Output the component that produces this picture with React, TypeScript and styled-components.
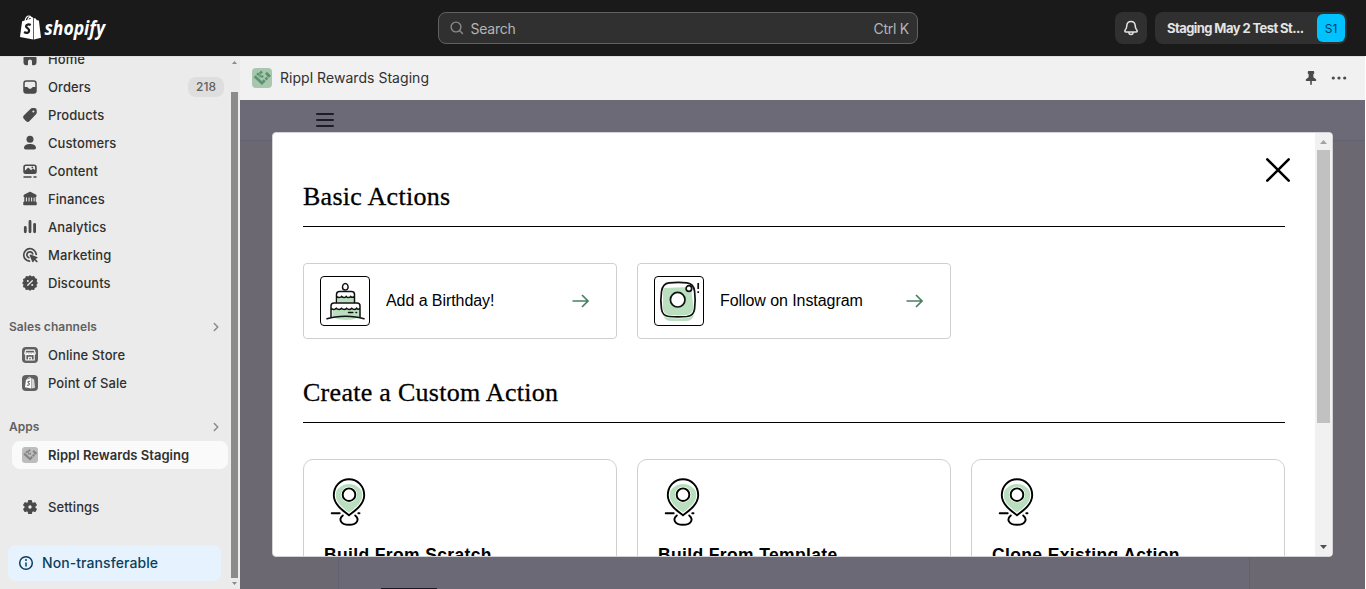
import React from "react";
import styled, { createGlobalStyle } from "styled-components";

const GlobalStyle = createGlobalStyle`
  *, *::before, *::after { box-sizing: border-box; }
  body { margin: 0; background: #fff; font-family: Inter, "Liberation Sans", sans-serif; overflow: hidden; }
  svg { display: block; flex: none; }
  h2, h3 { margin: 0; }
`;

const Page = styled.div`
  height: 589px;
  display: flex;
  flex-direction: column;
  overflow: hidden;
`;

/* Top bar */
const TopBar = styled.header`
  height: 56px;
  flex: none;
  background: #1a1a1a;
  display: grid;
  grid-template-columns: 438px 480px 1fr;
  align-items: center;
`;
const Brand = styled.div`
  padding-left: 19px;
`;
const SearchBox = styled.div`
  height: 32px;
  border: 1px solid #616161;
  border-radius: 8px;
  background: #303030;
  display: flex;
  align-items: center;
  padding: 0 8px;
  color: #b5b5b5;
  font-size: 14px;
  letter-spacing: -0.25px;
`;
const SearchText = styled.span`
  flex: 1;
  margin-left: 3.5px;
`;
const TopActions = styled.div`
  display: flex;
  justify-content: flex-end;
  gap: 8px;
  padding-right: 19px;
`;
const BellButton = styled.div`
  width: 32px;
  height: 32px;
  border-radius: 8px;
  background: #303030;
  display: grid;
  place-items: center;
`;
const StoreButton = styled.div`
  width: 192px;
  height: 32px;
  border-radius: 8px;
  background: #303030;
  display: flex;
  align-items: center;
  justify-content: space-between;
  padding: 0 2px 0 12px;
  color: #e3e3e3;
  font-size: 13px;
  font-weight: 700;
  white-space: nowrap;
  letter-spacing: -0.58px;
`;
const Avatar = styled.span`
  width: 28px;
  height: 28px;
  border-radius: 6px;
  background: #00c2ff;
  color: #003d59;
  font-size: 12px;
  font-weight: 400;
  letter-spacing: 0;
  display: grid;
  place-items: center;
`;

const Body = styled.div`
  flex: 1;
  display: flex;
  min-height: 0;
`;

/* Sidebar */
const Sidebar = styled.aside`
  width: 240px;
  flex: none;
  background: #ebebeb;
  display: flex;
  overflow: hidden;
  border-top: 1px solid #e0e0e0;
`;
const Nav = styled.nav`
  width: 231px;
  flex: none;
  margin-top: -12px;
  display: flex;
  flex-direction: column;
`;
const NavRow = styled.div<{ $active?: boolean }>`
  height: 28px;
  flex: none;
  margin: 0 3px 0 12px;
  padding: 0 4px 0 8px;
  border-radius: 8px;
  background: ${(p) => (p.$active ? "#fafafa" : "transparent")};
  color: #303030;
  display: flex;
  align-items: center;
  gap: 8px;
  font-size: 13px;
  font-weight: ${(p) => (p.$active ? 600 : 500)};
  letter-spacing: ${(p) => (p.$active ? "0.03px" : "0.08px")};
`;
const Count = styled.span`
  margin-left: auto;
  width: 36px;
  height: 20px;
  border-radius: 8px;
  background: #dedede;
  color: #616161;
  font-size: 12px;
  line-height: 19px;
  letter-spacing: 0;
  text-align: center;
`;
const SectionTitle = styled.div`
  height: 28px;
  flex: none;
  margin-top: 16px;
  padding: 0 5px 0 9px;
  display: flex;
  align-items: center;
  justify-content: space-between;
  color: #616161;
  font-size: 12px;
  font-weight: 600;
  letter-spacing: 0.05px;
  line-height: 16px;
`;
const SettingsGap = styled.div`
  height: 24px;
  flex: none;
`;
const Notice = styled.div`
  height: 36px;
  flex: none;
  width: 213px;
  margin: 24px 0 0 8px;
  padding-left: 8px;
  border-radius: 8px;
  background: #e6f3ff;
  color: #0b3f5c;
  display: flex;
  align-items: center;
  gap: 6px;
  font-size: 14px;
  font-weight: 500;
  letter-spacing: 0.08px;
`;
const NoticeText = styled.span`
  padding-bottom: 1px;
`;
const SideScroll = styled.div`
  width: 7px;
  display: flex;
  flex-direction: column;
  align-items: center;
  justify-content: space-between;
  padding: 4px 0 4px;
`;
const SideThumb = styled.div`
  width: 7px;
  height: 486px;
  margin-top: 26px;
  margin-bottom: 3px;
  background: #8b8b8b;
`;

/* Application frame */
const Main = styled.main`
  width: 1125px;
  display: flex;
  flex-direction: column;
`;
const AppBar = styled.div`
  height: 44px;
  flex: none;
  border-top: 1px solid #e0e0e0;
  background: #f1f1f1;
  display: flex;
  align-items: center;
  gap: 8px;
  padding: 0 16px 1px 12px;
  color: #303030;
  font-size: 14px;
  letter-spacing: 0.04px;
`;
const AppName = styled.span`
  line-height: 20px;
  padding-bottom: 1px;
`;
const AppBarEnd = styled.div`
  margin-left: auto;
  display: flex;
  gap: 8px;
`;
const Stage = styled.div`
  flex: 1;
  min-height: 0;
  position: relative;
  background: #6c6872;
  display: flex;
  flex-direction: column;
`;
const StageHeader = styled.div`
  height: 41px;
  flex: none;
  background: #6c6a77;
  border-bottom: 1px solid #636171;
  padding: 13px 0 0 76px;
`;
const StagePanel = styled.div`
  flex: 1;
  width: 912px;
  margin-left: 98px;
  border: 1px solid #63616e;
  border-width: 0 1px;
  background: #6b6975;
  display: flex;
  align-items: flex-end;
  padding-left: 42px;
`;
const StageButton = styled.div`
  width: 56px;
  height: 1px;
  background: #1b1927;
`;

/* Dialog */
const Dialog = styled.section`
  position: absolute;
  left: 32px;
  top: 32px;
  width: 1061px;
  height: 425px;
  border: 1px solid #d3d3d6;
  border-radius: 4px;
  background: #fff;
  display: flex;
  overflow: hidden;
`;
const DialogBody = styled.div`
  flex: 1;
  min-width: 0;
  padding: 0 30px;
  overflow: hidden;
  display: flex;
  flex-direction: column;
`;
const CloseRow = styled.div`
  height: 50px;
  flex: none;
  display: flex;
  justify-content: flex-end;
  padding: 24px 0 0;
  margin-right: -6px;
`;
const Heading = styled.h2<{ $spaced?: boolean }>`
  flex: none;
  height: ${(p) => (p.$spaced ? "84px" : "44px")};
  padding-top: ${(p) => (p.$spaced ? "40px" : "0")};
  border-bottom: 1px solid #000;
  color: #000;
  font-family: "Liberation Serif", serif;
  font-weight: 400;
  font-size: 26px;
  line-height: 27px;
  -webkit-text-stroke: 0.3px #000;
  letter-spacing: 0.28px;
`;
const CardGrid = styled.div`
  flex: none;
  margin-top: 36px;
  display: grid;
  grid-template-columns: repeat(3, 314px);
  gap: 20px;
`;
const ActionCard = styled.div`
  height: 76px;
  border: 1px solid #cfcfcf;
  border-radius: 4px;
  display: flex;
  align-items: center;
  padding: 0 25px 0 16px;
`;
const IconTile = styled.div`
  width: 50px;
  height: 50px;
  border: 1px solid #000;
  border-radius: 4px;
  display: grid;
  place-items: center;
`;
const ActionLabel = styled.span`
  flex: 1;
  margin-left: 16px;
  font-family: "Liberation Sans", sans-serif;
  font-size: 16px;
  color: #000;
  letter-spacing: -0.07px;
`;
const CustomCard = styled.div`
  height: 200px;
  border: 1px solid #cfcfcf;
  border-radius: 10px;
  padding: 16px 20px;
`;
const CustomTitle = styled.h3`
  margin-top: 19px;
  font-family: "Liberation Sans", sans-serif;
  font-size: 17.5px;
  line-height: 20px;
  font-weight: 700;
  color: #000;
  letter-spacing: 0.36px;
`;
const DialogScroll = styled.div`
  width: 17px;
  flex: none;
  background: #f1f1f1;
  display: flex;
  flex-direction: column;
  align-items: center;
  justify-content: space-between;
  padding: 7px 0;
`;
const DialogThumb = styled.div`
  width: 13px;
  height: 273px;
  margin: 6px 0 auto;
  background: #c1c1c1;
`;

const ink = "#4a4a4a";

const Icon = ({ children, size = 20 }: { children: React.ReactNode; size?: number }) => (
  <svg width={size} height={size} viewBox="0 0 20 20" fill="none">
    {children}
  </svg>
);

const HomeIcon = () => (
  <Icon>
    <path fill={ink} d="M8.3 3.300a2.500 2.500 0 0 1 3.400 0l3.900 3.700c.6.6.9 1.300.9 2.100v4.650a2.400 2.400 0 0 1-2.400 2.400h-1.350a.75.75 0 0 1-.75-.75v-2.900c0-1.100-.9-2-2-2s-2 .9-2 2v2.900c0 .4-.35.75-.75.75H5.900a2.400 2.400 0 0 1-2.400-2.400V9.100c0-.8.3-1.500.9-2.100z" />
  </Icon>
);
const OrdersIcon = () => (
  <Icon>
    <path fill={ink} fillRule="evenodd" d="M6.250 3.250a3 3 0 0 0-3 3v7.500a3 3 0 0 0 3 3h7.500a3 3 0 0 0 3-3v-7.500a3 3 0 0 0-3-3zM4.750 6.250c0-.85.65-1.500 1.500-1.500h7.500c.85 0 1.500.65 1.500 1.500V10h-2.100c-.5 0-.8.2-1.100.55l-.6.75c-.2.250-.4.350-.7.350H9.250c-.3 0-.5-.1-.7-.350l-.6-.75C7.650 10.200 7.350 10 6.850 10h-2.100z" />
  </Icon>
);
const ProductsIcon = () => (
  <Icon>
    <path fill={ink} fillRule="evenodd" d="M10.700 3.700c.5-.4 1-.6 1.600-.6h2.050a2.400 2.400 0 0 1 2.400 2.400v2.050c0 .7-.25 1.300-.75 1.800l-6.400 6.600a2.600 2.600 0 0 1-3.700 0l-1.900-1.900a2.600 2.600 0 0 1 0-3.700zM13.400 7.600a1.050 1.050 0 1 0 0-2.100 1.050 1.050 0 0 0 0 2.100z" />
  </Icon>
);
const CustomersIcon = () => (
  <Icon>
    <circle cx="10" cy="6.300" r="3.500" fill={ink} />
    <path fill={ink} d="M4 14.800c0-2.300 2.700-3.700 6-3.700s6 1.400 6 3.700c0 1-.8 1.700-1.800 1.700H5.800c-1 0-1.800-.7-1.800-1.700z" />
  </Icon>
);
const ContentIcon = () => (
  <Icon>
    <path fill={ink} fillRule="evenodd" d="M6 3.500A2.700 2.700 0 0 0 3.250 6.200v4.300A2.500 2.500 0 0 0 5.750 13h8.500a2.500 2.500 0 0 0 2.500-2.500V6.200A2.700 2.700 0 0 0 14 3.500zM4.900 6.300c0-.8.5-1.300 1.300-1.300h7.600c.8 0 1.300.5 1.300 1.300v2.900l-1.300-1.100c-.5-.4-1-.4-1.500 0l-1.200 1.100-2-2c-.5-.5-1.100-.5-1.600 0L4.900 9.700z" />
    <circle cx="12.300" cy="6.400" r=".9" fill={ink} />
    <path stroke={ink} strokeWidth="1.500" strokeLinecap="round" d="M4 15.900h7M14 15.900h2" />
  </Icon>
);
const FinancesIcon = () => (
  <Icon>
    <path fill={ink} d="M9.300 2.900c.5-.25 1-.25 1.500 0l5 2.500c.9.500 1.200 2.600-.1 2.700v4.500c.7.100 1.050.6 1.050 1.300v1.600c0 .5-.3.750-.75.750H4c-.45 0-.75-.25-.75-.75v-1.600c0-.7.4-1.200 1.050-1.300V8.100C3 8 3.400 5.900 4.300 5.400z" />
    <path stroke="#ebebeb" strokeWidth="1.050" d="M6.400 8.500v4M9 8.500v4M11.600 8.500v4M14.100 8.500v4" />
  </Icon>
);
const AnalyticsIcon = () => (
  <Icon>
    <path stroke={ink} strokeWidth="2.800" strokeLinecap="round" d="M5.300 10.500v4.300M10 4.500v10.300M14.600 7.300v7.500" />
  </Icon>
);
const MarketingIcon = () => (
  <Icon>
    <path stroke={ink} strokeWidth="1.700" strokeLinecap="round" d="M9.500 16.200A6.250 6.250 0 1 1 16.200 9.400M8.800 12.600A3 3 0 1 1 12.700 8.800" />
    <path fill={ink} d="M9.700 10.500c-.2-.6.3-1.100.9-.9l6.500 2.300c.7.250.7 1.100 0 1.400l-1.600.7 1.900 1.900c.8.8-.4 2-1.200 1.200l-1.900-1.900-.7 1.600c-.3.700-1.200.6-1.400 0z" />
  </Icon>
);
const DiscountsIcon = () => (
  <Icon>
    <path fill={ink} stroke={ink} strokeWidth="1.500" strokeLinejoin="round" d="M10 3l1.700 1.300 2.100-.5 .7 1.900 1.900.8-.6 2L17 10l-1.300 1.600.5 2-1.900.7-.7 1.900-2-.5L10 17l-1.600-1.300-2.100.5-.7-1.900-1.900-.7.6-2L3 10l1.300-1.600-.5-2 1.900-.7.7-1.900 2 .5z" />
    <path stroke="#ebebeb" strokeWidth="1.300" strokeLinecap="round" d="M12.300 7.700l-4.600 4.600" />
    <circle cx="7.800" cy="8" r="1" fill="#ebebeb" />
    <circle cx="12.200" cy="12" r="1" fill="#ebebeb" />
  </Icon>
);
const StoreIcon = () => (
  <Icon>
    <rect x="2" y="2" width="16" height="16" rx="4" fill="#616161" />
    <path stroke="#fff" strokeWidth="1.100" strokeLinejoin="round" d="M5.700 5.100h8.600l1 3.200c0 1.700-2.300 1.700-2.700.2-.4 1.500-2.300 1.500-2.600 0-.3 1.500-2.200 1.500-2.600 0-.4 1.500-2.700 1.500-2.700-.2zM4.800 8h10.400M5.800 10v5h8.400v-5M8.700 15v-2.800h2.600V15" />
  </Icon>
);
const Bag = ({ front, side, letter }: { front: string; side: string; letter: string }) => (
  <>
    <path fill={front} d="M3.100 6.200 14.300 3.200V24.500L1 22z" />
    <path fill={side} d="M15 3.200l1.200.1 1.800 1.900 1.900.2L22 22.800 15 24.500z" />
    <path stroke={front} strokeWidth="1.200" fill="none" d="M6 6C6.600 3 8.300 1 10 1c1.500 0 2.400 1.600 2.400 4M8.800 5c.7-2 1.900-3 3.100-2.800 1 .2 1.700 1 2 2" />
    <path stroke={letter} strokeWidth="2.300" fill="none" d="M11.700 10c-2-1.100-4.500-.6-4.600 1.200-.1 2 3.300 2 3 4.600-.3 2.200-2.700 2.700-5 1.200" />
  </>
);
const PosIcon = () => (
  <Icon>
    <rect x="2" y="2" width="16" height="16" rx="4" fill="#616161" />
    <g transform="translate(4.500 3.700) scale(.48)">
      <Bag front="#fff" side="#d6d6d6" letter="#616161" />
    </g>
  </Icon>
);
const RipplIcon = ({ size, bg, fg }: { size: number; bg: string; fg: string }) => (
  <Icon size={size}>
    <rect width="20" height="20" rx="4" fill={bg} />
    <path stroke={fg} strokeWidth="2.700" d="M2.600 8.300l8.300 7.700M9.100 15.900l3.700-3.600M13.500 11.500l1.800-1.800M14 4.800l4 3.900" />
    <path stroke={fg} strokeWidth="2.400" d="M5 5.300l3.800 3.600M7.700 5.600l2.400-2.100M15.300 8.700l2.200-2.200" />
    <circle cx="10.300" cy="8.500" r="1.200" fill={fg} />
    <circle cx="7" cy="8" r=".8" fill={bg} />
  </Icon>
);
const SettingsIcon = () => (
  <Icon>
    <path fill={ink} fillRule="evenodd" stroke={ink} strokeWidth="1.200" strokeLinejoin="round" d="M8.700 3.700h2.600l.5 2 1.200.7 2-.6 1.300 2.200-1.500 1.400v1.400l1.500 1.400-1.300 2.200-2-.6-1.200.7-.5 2H8.700l-.5-2-1.200-.7-2 .6-1.300-2.200 1.500-1.400V9.400L3.700 8 5 5.800l2 .6 1.200-.7zM10 12.300a2.300 2.300 0 1 0 0-4.600 2.300 2.300 0 0 0 0 4.600z" />
  </Icon>
);
const InfoIcon = () => (
  <Icon>
    <circle cx="10" cy="10" r="6.300" stroke="#0b3f5c" strokeWidth="1.500" />
    <path stroke="#0b3f5c" strokeWidth="1.500" strokeLinecap="round" d="M10 10v3" />
    <circle cx="10" cy="7" r="1" fill="#0b3f5c" />
  </Icon>
);
const Chevron = () => (
  <Icon>
    <path stroke="#8a8a8a" strokeWidth="1.500" strokeLinecap="round" strokeLinejoin="round" d="M8.300 6.500l3.500 3.500-3.500 3.500" />
  </Icon>
);
const Triangle = ({ down, color, w = 7 }: { down?: boolean; color: string; w?: number }) => (
  <svg width={w} height={w === 5 ? 3 : 4} viewBox="0 0 8 4" preserveAspectRatio="none">
    <path fill={color} d={down ? "M0 0h8L4 4z" : "M0 4h8L4 0z"} />
  </svg>
);
const Arrow = () => (
  <svg width="20" height="16" viewBox="0 0 20 16" fill="none" stroke="#4b7f62" strokeWidth="1.700">
    <path d="M1.500 8h15.500M11 2l6 6-6 6" />
  </svg>
);

const CakeIcon = () => (
  <svg width="48" height="48" viewBox="0 0 48 48" fill="none" stroke="#111" strokeWidth="1.500" strokeLinecap="round">
    <path fill="#b9dfbf" stroke="none" d="M17 20.500h16v5H17zM11.500 32h27v7.500c-4 4.500-23 4.500-27 0z" />
    <path d="M24.300 6.500c1.700 0 2.800 2 2.800 3.700a2.800 2.800 0 0 1-5.600 0c0-1.700 1.100-3.700 2.800-3.700z" />
    <path d="M15.500 25.500V17.500c0-2 1-3 3-3h12c2 0 3 1 3 3v8M15.500 19.200c1.500 1.800 3.700 1.800 5 .2 1.600 1.600 3.500 1.600 4.700 0 1.400 1.600 3.200 1.500 4.500 0 1 1.200 2.600 1.200 3.800 0" />
    <path d="M10 40V29c0-2 1-3 3-3h23c2 0 3 1 3 3v11M10 31c1.700 2 3.800 2 5.300.3 1.700 1.700 3.600 1.700 5.200 0 1.700 1.700 3.500 1.700 5.100 0 1.700 1.700 3.500 1.700 5.100 0 1.700 1.700 3.400 1.700 4.900 0 1 1.400 2.400 1.300 3.400-.2" />
    <path d="M6 41.800c10-3.500 27-3.500 37 0M27.500 35.500h4.300M35 35.500h.5" />
  </svg>
);
const InstagramIcon = () => (
  <svg width="48" height="48" viewBox="0 0 48 48" fill="none" stroke="#111" strokeWidth="1.700" strokeLinecap="round">
    <path fill="#b9dfbf" stroke="none" d="M8 11l28-1 3 25c0 6-3 9-8 9H16c-6 0-8-4-8-9z" />
    <path stroke="#fff" strokeWidth="3" d="M6.500 32C5.700 27 5.700 20 6.500 14.500S10 6.200 14 5.800c6-.6 13-.6 18 0 4.500.5 7 3 7.600 8.500.7 5.500.7 12 0 17.500S36 39 32 39.500c-6 .6-12 .6-18 0-4.500-.5-6.900-2.500-7.500-7.500z" />
    <path d="M6.500 32C5.700 27 5.700 20 6.500 14.500S10 6.200 14 5.800c6-.6 13-.6 18 0 4.500.5 7 3 7.600 8.500.7 5.500.7 12 0 17.500S36 39 32 39.500c-6 .6-12 .6-18 0-4.500-.5-6.900-2.500-7.500-7.500z" />
    <circle cx="22.700" cy="22.700" r="7.300" fill="#fff" />
    <circle cx="33.900" cy="11.500" r="2.800" fill="#fff" />
    <path strokeLinecap="butt" d="M43.200 6v6M43.200 14.200v1.900" />
  </svg>
);
const PinIcon = () => (
  <svg width="50" height="50" viewBox="0 0 50 50" fill="none" stroke="#000" strokeWidth="1.900" strokeLinecap="round">
    <g transform="translate(.5 .7)">
      <circle cx="24.500" cy="22" r="14.800" fill="#b9dfbf" stroke="none" />
      <path stroke="#fff" strokeWidth="4" d="M24.500 38.500C17 33 9.300 27 9.300 18.500c0-9 6.500-16 15.200-16s15.200 7 15.200 16C39.700 27 32 33 24.500 38.500z" />
      <path d="M24.500 38.500C17 33 9.300 27 9.300 18.500c0-9 6.500-16 15.200-16s15.200 7 15.200 16C39.700 27 32 33 24.500 38.500z" />
      <circle cx="24.500" cy="18" r="7.900" fill="#fff" stroke="none" />
      <circle cx="24.500" cy="18" r="6.300" />
      <path d="M7.200 36.500h8M33.800 36.500h1.200M18.300 38.700c-4.300 3.500-2.800 9.400 6.200 9.400s10.500-5.900 6.200-9.400" />
    </g>
  </svg>
);

const navItems: [string, () => React.ReactElement, string?][] = [
  ["Home", HomeIcon],
  ["Orders", OrdersIcon, "218"],
  ["Products", ProductsIcon],
  ["Customers", CustomersIcon],
  ["Content", ContentIcon],
  ["Finances", FinancesIcon],
  ["Analytics", AnalyticsIcon],
  ["Marketing", MarketingIcon],
  ["Discounts", DiscountsIcon],
];

const customActions = ["Build From Scratch", "Build From Template", "Clone Existing Action"];

export default function App() {
  return (
    <Page>
      <GlobalStyle />
      <TopBar>
        <Brand>
          <svg width="90" height="28" viewBox="0 0 90 28">
            <g transform="translate(0 1)">
              <Bag front="#fff" side="#fff" letter="#1a1a1a" />
            </g>
            <text x="25.500" y="20.700" fill="#fff" fontFamily="Open Sans, sans-serif" fontWeight="700" fontStyle="italic" fontSize="19" textLength="60.500" lengthAdjust="spacingAndGlyphs">
              shopify
            </text>
          </svg>
        </Brand>
        <SearchBox>
          <Icon>
            <circle cx="9" cy="9" r="4.900" stroke="#8a8a8a" strokeWidth="1.400" />
            <path stroke="#8a8a8a" strokeWidth="1.400" strokeLinecap="round" d="M12.700 12.700l2.800 2.800" />
          </Icon>
          <SearchText>Search</SearchText>
          <span>Ctrl K</span>
        </SearchBox>
        <TopActions>
          <BellButton>
            <Icon>
              <path stroke="#e3e3e3" strokeWidth="1.500" strokeLinejoin="round" d="M10 3.600c-2.400 0-4 1.700-4.200 4-.1 2-.3 3-1.400 4.200-1 1.100-.7 2.100.6 2.100h10c1.300 0 1.600-1 .6-2.100-1.100-1.200-1.300-2.200-1.400-4.200-.2-2.300-1.800-4-4.200-4zM7.900 14.200c0 1.400.9 2.300 2.100 2.300s2.100-.9 2.100-2.300" />
            </Icon>
          </BellButton>
          <StoreButton>
            Staging May 2 Test St...
            <Avatar>S1</Avatar>
          </StoreButton>
        </TopActions>
      </TopBar>
      <Body>
        <Sidebar>
          <Nav>
            {navItems.map(([label, Glyph, count]) => (
              <NavRow key={label}>
                <Glyph />
                {label}
                {count && <Count>{count}</Count>}
              </NavRow>
            ))}
            <SectionTitle>
              Sales channels
              <Chevron />
            </SectionTitle>
            <NavRow><StoreIcon />Online Store</NavRow>
            <NavRow><PosIcon />Point of Sale</NavRow>
            <SectionTitle>
              Apps
              <Chevron />
            </SectionTitle>
            <NavRow $active>
              <Icon>
                <svg x="2" y="2" width="16" height="16" viewBox="0 0 20 20">
                  <RipplIcon size={20} bg="#bdbdbd" fg="#858585" />
                </svg>
              </Icon>
              Rippl Rewards Staging
            </NavRow>
            <SettingsGap />
            <NavRow><SettingsIcon />Settings</NavRow>
            <Notice>
              <InfoIcon />
              <NoticeText>Non-transferable</NoticeText>
            </Notice>
          </Nav>
          <SideScroll>
            <Triangle color="#8b8b8b" w={5} />
            <SideThumb />
            <Triangle down color="#8b8b8b" w={5} />
          </SideScroll>
        </Sidebar>
        <Main>
          <AppBar>
            <RipplIcon size={20} bg="#a9c6ae" fg="#5a936f" />
            <AppName>Rippl Rewards Staging</AppName>
            <AppBarEnd>
              <Icon>
                <path fill={ink} d="M6.800 3.700c0-.5.300-.8.800-.8h4.800c.5 0 .8.3.8.8v1.500c0 .5-.3.800-.8.800v3.300l2.300 1.700c.4.300.6.700.6 1.200 0 .5-.3.800-.8.800h-3.700v3.200c0 1-1.600 1-1.600 0V13H5.500c-.5 0-.8-.3-.8-.8s.2-.9.600-1.200l2.300-1.700V6c-.5 0-.8-.3-.8-.8z" />
              </Icon>
              <Icon>
                <circle cx="4.300" cy="10" r="1.600" fill={ink} />
                <circle cx="10" cy="10" r="1.600" fill={ink} />
                <circle cx="15.700" cy="10" r="1.600" fill={ink} />
              </Icon>
            </AppBarEnd>
          </AppBar>
          <Stage>
            <StageHeader>
              <svg width="18" height="14" viewBox="0 0 18 14" stroke="#1d1b2a" strokeWidth="2" strokeLinecap="round">
                <path d="M1 1h16M1 7h16M1 13h16" />
              </svg>
            </StageHeader>
            <StagePanel>
              <StageButton />
            </StagePanel>
            <Dialog>
              <DialogBody>
                <CloseRow>
                  <svg width="26" height="26" viewBox="0 0 26 26" stroke="#000" strokeWidth="2.600" strokeLinecap="round">
                    <path d="M2.300 2.300l21.400 21.400M23.700 2.300L2.300 23.700" />
                  </svg>
                </CloseRow>
                <Heading>Basic Actions</Heading>
                <CardGrid>
                  <ActionCard>
                    <IconTile><CakeIcon /></IconTile>
                    <ActionLabel>Add a Birthday!</ActionLabel>
                    <Arrow />
                  </ActionCard>
                  <ActionCard>
                    <IconTile><InstagramIcon /></IconTile>
                    <ActionLabel>Follow on Instagram</ActionLabel>
                    <Arrow />
                  </ActionCard>
                </CardGrid>
                <Heading $spaced>Create a Custom Action</Heading>
                <CardGrid>
                  {customActions.map((label) => (
                    <CustomCard key={label}>
                      <PinIcon />
                      <CustomTitle>{label}</CustomTitle>
                    </CustomCard>
                  ))}
                </CardGrid>
              </DialogBody>
              <DialogScroll>
                <Triangle color="#a3a3a3" />
                <DialogThumb />
                <Triangle down color="#505050" />
              </DialogScroll>
            </Dialog>
          </Stage>
        </Main>
      </Body>
    </Page>
  );
}
